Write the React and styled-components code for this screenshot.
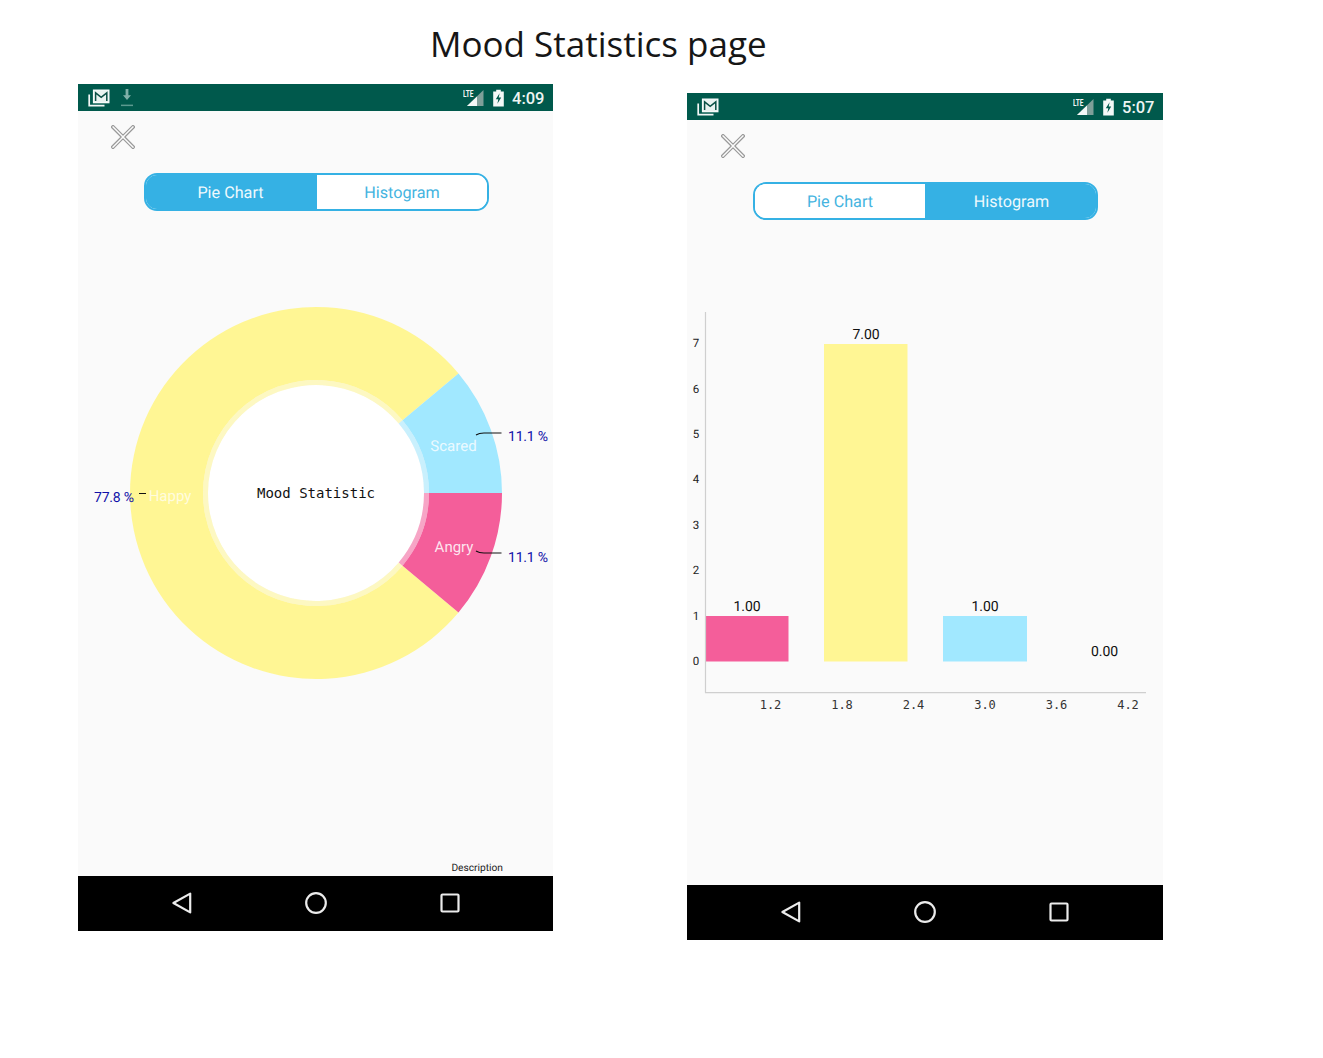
import React from "react";
import styled, { createGlobalStyle } from "styled-components";

const Global = createGlobalStyle`
  html, body { margin: 0; padding: 0; background: #fff; }
  body { font-family: Roboto, "Liberation Sans", sans-serif; }
`;

const Page = styled.main`
  width: 1323px;
  height: 1058px;
  overflow: hidden;
  display: flex;
  flex-direction: column;
`;
const Title = styled.h1`
  margin: 0;
  height: 84px;
  padding: 21px 0 0 430px;
  box-sizing: border-box;
  font: 400 35px/46px "Open Sans", sans-serif;
  color: #161616;
`;
const Phones = styled.div`
  display: flex;
  align-items: flex-start;
  gap: 134px;
  padding-left: 78px;
`;
const Phone = styled.section`
  width: ${p => p.$w}px;
  height: 847px;
  margin-top: ${p => p.$top || 0}px;
  background: #fafafa;
  display: flex;
  flex-direction: column;
`;
const StatusBar = styled.div`
  flex: none;
  height: 27px;
  background: #00594c;
  display: flex;
  align-items: center;
  padding: 0 9px 0 10px;
`;
const StatusLeft = styled.div`
  display: flex;
  align-items: center;
  gap: 11px;
  flex: 1;
`;
const StatusRight = styled.div`
  display: flex;
  align-items: center;
  gap: 9px;
`;
const Clock = styled.span`
  font: 500 16.5px/27px Roboto, sans-serif;
  color: #eef5f3;
  width: 32px;
  margin-left: -1px;
  padding-top: 2px;
  white-space: nowrap;
`;
const CloseRow = styled.div`
  flex: none;
  height: 62px;
  padding: 14px 0 0 ${p => p.$x}px;
  box-sizing: border-box;
`;
const Toggle = styled.div`
  flex: none;
  width: 345px;
  height: 38px;
  margin-left: 66px;
  box-sizing: border-box;
  border: 2px solid #35b1e4;
  border-radius: 13px;
  overflow: hidden;
  display: grid;
  grid-template-columns: ${p => p.$split}px 1fr;
  background: #fff;
`;
const Segment = styled.div`
  display: flex;
  align-items: center;
  justify-content: center;
  padding: 2px ${p => p.$padRight || 0}px 0 ${p => p.$padLeft || 0}px;
  font: 400 16.2px/1 Roboto, sans-serif;
  text-rendering: geometricPrecision;
  color: ${p => (p.$active ? "#eef9fd" : "#45b4df")};
  background: ${p => (p.$active ? "#35b1e4" : "#fff")};
`;
const ChartSvg = styled.svg`
  flex: none;
  display: block;
  width: ${p => p.$w}px;
  height: 665px;
`;
const NavBar = styled.nav`
  flex: none;
  height: 55px;
  box-sizing: border-box;
  padding-bottom: 2px;
  background: #000;
  display: flex;
  align-items: center;
  justify-content: center;
  gap: 110px;
`;
const T = styled.text`
  font-family: Roboto, sans-serif;
  font-size: ${p => p.$size || 14}px;
  letter-spacing: ${p => p.$track || 0}px;
  text-rendering: geometricPrecision;
  fill: ${p => p.$fill || "#111"};
  text-anchor: ${p => p.$anchor || "middle"};
`;
const Mono = styled.text`
  font-family: "DejaVu Sans Mono", monospace;
  font-size: ${p => p.$size || 12}px;
  fill: ${p => p.$fill || "#333"};
  text-anchor: middle;
`;

const MailIcon = () => (
  <svg width="22" height="20" viewBox="0 0 22 20">
    <path d="M1.2 6.5V17.6H16.5" fill="none" stroke="#f2f7f6" strokeWidth="1.7" />
    <rect x="5.6" y="2.2" width="15.2" height="12.4" fill="#e9f2f0" stroke="#f6faf9" strokeWidth="1.4" />
    <path d="M7.6 13V4.8L13.2 9.4L18.8 4.8V13" fill="none" stroke="#0a4f45" strokeWidth="1.5" />
  </svg>
);
const DownloadIcon = () => (
  <svg width="12" height="20" viewBox="0 0 12 20">
    <path d="M4.6 1h2.8v6.2H10L6 12 2 7.2h2.6z" fill="#7fb0a8" />
    <rect x="0" y="16.6" width="12" height="1.5" fill="#5c9a90" />
  </svg>
);
const LteIcon = () => (
  <svg width="21" height="18" viewBox="0 0 21 18">
    <path d="M20.5 1V17H4z" fill="#7f9f99" />
    <path d="M14 7.4V17H4z" fill="#f4f8f7" />
    <text x="0" y="8" fontFamily="Roboto, sans-serif" fontSize="9.5" fontWeight="700" fill="#f4f8f7" textLength="10.5" lengthAdjust="spacingAndGlyphs">LTE</text>
  </svg>
);
const BatteryIcon = () => (
  <svg width="11" height="18" viewBox="0 0 11 18">
    <path d="M3.2 0.8h4.6v1.6h3V17.4H0.2V2.4h3z" fill="#f4f8f7" />
    <path d="M6.6 4.2L2.8 10.2h2.5L4.4 14.8L8.2 8.4H5.7z" fill="#00594c" />
  </svg>
);
const CloseIcon = () => (
  <svg width="24" height="24" viewBox="0 0 24 24">
    <path
      d="M-1.3 -15.4H1.3V-1.3H15.4V1.3H1.3V15.4H-1.3V1.3H-15.4V-1.3H-1.3Z"
      transform="translate(12 12) rotate(45)"
      fill="#fbfbfb"
      stroke="#9a9a9a"
      strokeWidth="1.2"
      strokeLinejoin="round"
    />
  </svg>
);
const BackIcon = () => (
  <svg width="24" height="24" viewBox="0 0 24 24">
    <path d="M20.2 2.6V21.4L3.4 12z" fill="none" stroke="#ececec" strokeWidth="2.2" strokeLinejoin="round" />
  </svg>
);
const HomeIcon = () => (
  <svg width="24" height="24" viewBox="0 0 24 24">
    <circle cx="12" cy="12" r="9.8" fill="none" stroke="#ececec" strokeWidth="2.2" />
  </svg>
);
const RecentIcon = () => (
  <svg width="24" height="24" viewBox="0 0 24 24">
    <rect x="3.5" y="3.5" width="17" height="17" rx="1" fill="none" stroke="#ececec" strokeWidth="2.2" />
  </svg>
);

const StatusRow = ({ time, download }) => (
  <StatusBar>
    <StatusLeft>
      <MailIcon />
      {download && <DownloadIcon />}
    </StatusLeft>
    <StatusRight>
      <LteIcon />
      <BatteryIcon />
      <Clock>{time}</Clock>
    </StatusRight>
  </StatusBar>
);
const Nav = () => (
  <NavBar>
    <BackIcon />
    <HomeIcon />
    <RecentIcon />
  </NavBar>
);

const CX = 316, CY = 493;
const polar = (r, deg) => {
  const a = (deg * Math.PI) / 180;
  return [CX + r * Math.cos(a), CY - r * Math.sin(a)];
};
const arc = (ro, ri, from, to) => {
  const [x1, y1] = polar(ro, from);
  const [x2, y2] = polar(ro, to);
  const [x3, y3] = polar(ri, to);
  const [x4, y4] = polar(ri, from);
  const large = to - from > 180 ? 1 : 0;
  return `M${x1} ${y1}A${ro} ${ro} 0 ${large} 0 ${x2} ${y2}L${x3} ${y3}A${ri} ${ri} 0 ${large} 1 ${x4} ${y4}Z`;
};
const slices = [
  { color: "#fff694", from: 40, to: 320 },
  { color: "#a1e8ff", from: 0, to: 40 },
  { color: "#f45e9a", from: -40, to: 0 },
];

const PieChart = () => (
  <ChartSvg $w={475} viewBox="78 211 475 665">
    <circle cx={CX} cy={CY} r={108} fill="#fff" />
    {slices.map(s => (
      <g key={s.color}>
        <path d={arc(186, 113, s.from, s.to)} fill={s.color} />
        <path d={arc(113, 108, s.from, s.to)} fill={s.color} opacity="0.55" />
      </g>
    ))}
    <Mono x={CX} y={498} $size={14} $fill="#111">Mood Statistic</Mono>
    <T x={453.5} y={451} $size={15} $fill="rgba(255,255,255,.8)">Scared</T>
    <T x={454} y={552} $size={15} $fill="rgba(255,255,255,.85)">Angry</T>
    <T x={170} y={501} $size={15} $fill="rgba(255,255,255,.7)">Happy</T>
    <path d="M476 435Q479 433 484 433H501.5M476 551Q479 553 484 553H501.5M139 493.5H146" fill="none" stroke="#111" strokeWidth="1.1" />
    <T x={508} y={441} $size={14} $track={-0.2} $anchor="start" $fill="#1010a8">11.1 %</T>
    <T x={508} y={562} $size={14} $track={-0.2} $anchor="start" $fill="#1010a8">11.1 %</T>
    <T x={94} y={502} $size={14} $track={-0.2} $anchor="start" $fill="#1010a8">77.8 %</T>
    <T x={503} y={871} $anchor="end" $size={10.2} $fill="#222">Description</T>
  </ChartSvg>
);

const yTicks = [
  ["7", 347], ["6", 392.5], ["5", 438], ["4", 483], ["3", 529], ["2", 574], ["1", 619.5], ["0", 664.5],
];
const xTicks = [["1.2", 770.5], ["1.8", 842], ["2.4", 913.5], ["3.0", 985], ["3.6", 1056.5], ["4.2", 1128]];
const bars = [
  { x: 705.5, w: 83, top: 616, color: "#f45e9a" },
  { x: 824, w: 83.5, top: 344, color: "#fff694" },
  { x: 943, w: 84, top: 616, color: "#a1e8ff" },
];
const values = [["1.00", 747, 611], ["7.00", 866, 339], ["1.00", 985, 611], ["0.00", 1104.5, 656]];

const BarChart = () => (
  <ChartSvg $w={476} viewBox="687 220 476 665">
    {bars.map(b => (
      <rect key={b.x} x={b.x} y={b.top} width={b.w} height={661.5 - b.top} fill={b.color} />
    ))}
    <path d="M705.5 312V692.7H1146" fill="none" stroke="#cfcfcf" strokeWidth="1.2" />
    {yTicks.map(([l, y]) => (
      <T key={l} x={696} y={y} $size={11.5} $fill="#222">{l}</T>
    ))}
    {xTicks.map(([l, x]) => (
      <Mono key={l} x={x} y={708.5}>{l}</Mono>
    ))}
    {values.map(([l, x, y]) => (
      <T key={x} x={x} y={y} $size={14} $track={-0.1} $fill="#111">{l}</T>
    ))}
  </ChartSvg>
);

const Screen = ({ w, top, time, download, pie }) => (
  <Phone $w={w} $top={top}>
    <StatusRow time={time} download={download} />
    <CloseRow $x={pie ? 33 : 34}><CloseIcon /></CloseRow>
    <Toggle $split={pie ? 171 : 170}>
      <Segment $active={pie} $padRight={pie ? 2 : 0}>Pie Chart</Segment>
      <Segment $active={!pie} $padLeft={pie ? 0 : 2}>Histogram</Segment>
    </Toggle>
    {pie ? <PieChart /> : <BarChart />}
    <Nav />
  </Phone>
);

export default function App() {
  return (
    <Page>
      <Global />
      <Title>Mood Statistics page</Title>
      <Phones>
        <Screen w={475} time="4:09" download pie />
        <Screen w={476} top={9} time="5:07" />
      </Phones>
    </Page>
  );
}
